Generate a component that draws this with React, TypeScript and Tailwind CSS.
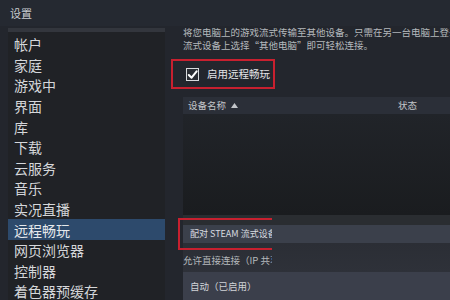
import React from 'react';

const navItems = [
    '帐户', '家庭', '游戏中', '界面', '库', '下载', '云服务',
    '音乐', '实况直播', '远程畅玩', '网页浏览器', '控制器', '着色器预缓存',
];

const font = { fontFamily: '"Noto Sans CJK SC", "Noto Sans", sans-serif' };

export default function App() {
    return (
        <div className="w-[450px] h-[300px] overflow-hidden bg-[#23262d] text-[#dcdedf] flex flex-col" style={font}>
            {/* Title bar */}
            <div className="h-[26px] shrink-0 flex items-center pl-[10px] text-[11px] text-[#c9ccd0] bg-[#252931]">设置</div>

            <div className="flex flex-1 min-h-0">
                {/* Sidebar */}
                <div className="ml-[8px] mt-[2px] w-[157px] shrink-0 bg-[#202226] border-t-[4px] border-[#33363d] pt-[2px]">
                    {navItems.map((item) => (
                        <div
                            key={item}
                            className={`h-[20.6px] flex items-center pl-[6px] text-[14px] leading-none ${item === '远程畅玩' ? 'bg-[#2d4a6c] text-[#e6e9ec]' : 'text-[#d5d7da]'}`}
                        >
                            {item}
                        </div>
                    ))}
                </div>

                {/* Main */}
                <div className="flex-1 min-w-0 pl-[18px] flex flex-col">
                    <div className="text-[9.5px] leading-[13px] text-[#b4b8bc] whitespace-nowrap overflow-hidden">
                        <div>将您电脑上的游戏流式传输至其他设备。只需在另一台电脑上登录 Steam</div>
                        <div>流式设备上选择“其他电脑”即可轻松连接。</div>
                    </div>

                    {/* Enable checkbox */}
                    <div className="relative h-[30px] mt-[7px] flex items-center pl-[3px] gap-[8px]">
                        <div className="w-[13px] h-[13px] border border-[#d8dadd] bg-[#2a2d33] flex items-center justify-center">
                            <svg width="11" height="11" viewBox="0 0 12 12" fill="none" stroke="#ffffff" strokeWidth="2.2" strokeLinecap="round" strokeLinejoin="round">
                                <polyline points="2 6.5 5 9.5 10.5 2.5" />
                            </svg>
                        </div>
                        <span className="text-[10.5px] text-[#e2e4e7]">启用远程畅玩</span>
                        <div className="absolute left-[-12px] top-0 w-[104px] h-[30px] border-2 border-[#c8202f]" />
                    </div>

                    {/* Device table */}
                    <div className="mt-[8px] h-[17px] bg-[#2b2f38] flex items-center text-[9.5px] text-[#c3c6ca]">
                        <span className="pl-[5px] flex items-center gap-[5px]">
                            设备名称
                            <svg width="7" height="5" viewBox="0 0 7 5"><polygon points="0,5 3.5,0 7,5" fill="#c3c6ca" /></svg>
                        </span>
                        <span className="ml-auto mr-[33px]">状态</span>
                    </div>
                    <div className="h-[101px] bg-gradient-to-b from-[#212429] to-[#1a1c1f]" />

                    {/* Pair button + direct connect */}
                    <div className="relative">
                        <div className="h-[10px] bg-[#2a2d31]" />
                        <div className="h-[18px] bg-[#3b404b] flex items-center pl-[7px] text-[9px] text-[#d9dce0]">
                            <span className="w-[82px] overflow-hidden whitespace-nowrap">配对 STEAM 流式设备</span>
                        </div>
                        <div className="h-[29px] bg-gradient-to-b from-[#2b2e35] to-[#2e3139] flex items-end pb-[5px] text-[9.5px] text-[#b4b8bc]">
                            <span className="w-[89px] overflow-hidden whitespace-nowrap">允许直接连接（IP 共享）</span>
                        </div>
                        <div className="absolute left-[-5px] top-[3px] w-[94px] h-[32px] border-2 border-r-0 border-[#c8202f]" />
                    </div>
                    <div className="h-[28px] bg-[#3b3f4b] flex items-center pl-[7px] text-[9.5px] text-[#d0d3d7]">
                        <span className="w-[82px] overflow-hidden whitespace-nowrap">自动（已启用）</span>
                    </div>
                </div>
            </div>
        </div>
    );
}
